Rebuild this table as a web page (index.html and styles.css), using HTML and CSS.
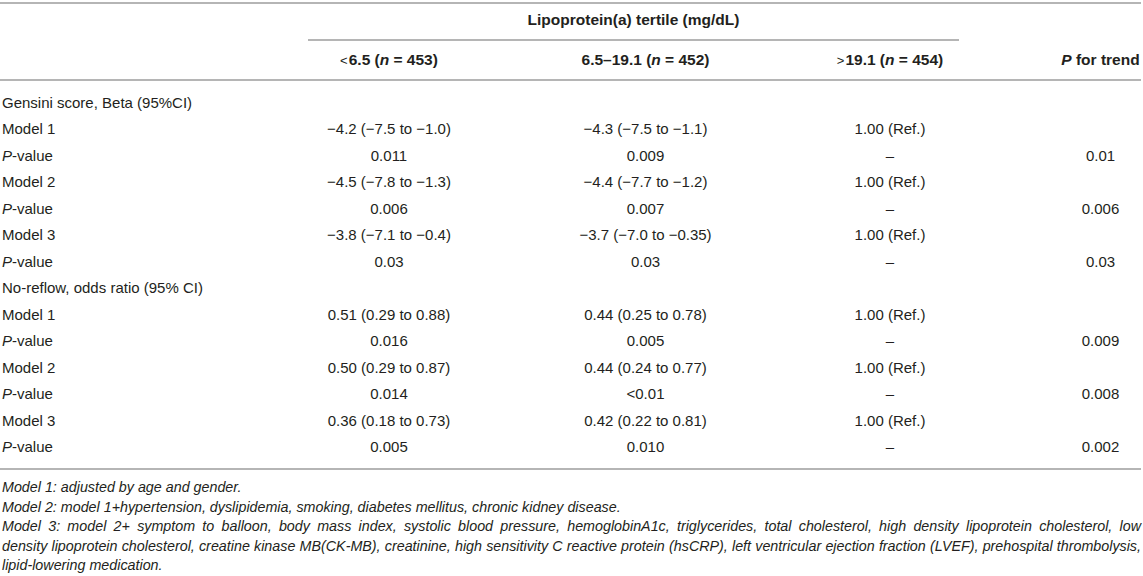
FILE: index.html
```html
<!DOCTYPE html>
<html lang="en">
<head>
<meta charset="utf-8">
<title>Lipoprotein(a) tertile table</title>
<link rel="stylesheet" href="styles.css">
</head>
<body>
<div class="wrap">
<table class="tbl">
  <colgroup>
    <col class="c1"><col class="c2"><col class="c3"><col class="c4"><col class="c5">
  </colgroup>
  <thead>
    <tr class="hr1">
      <th></th>
      <th colspan="3" class="span">Lipoprotein(a) tertile (mg/dL)</th>
      <th></th>
    </tr>
    <tr class="hr2">
      <th></th>
      <th><span class="lt">&lt;</span>6.5 (<i>n</i> = 453)</th>
      <th>6.5–19.1 (<i>n</i> = 452)</th>
      <th><span class="lt">&gt;</span>19.1 (<i>n</i> = 454)</th>
      <th class="trend"><i>P</i> for trend</th>
    </tr>
  </thead>
  <tbody>
    <tr class="first"><td>Gensini score, Beta (95%CI)</td><td></td><td></td><td></td><td class="trend"></td></tr>
    <tr><td>Model 1</td><td>−4.2 (−7.5 to −1.0)</td><td>−4.3 (−7.5 to −1.1)</td><td>1.00 (Ref.)</td><td class="trend"></td></tr>
    <tr><td><i>P</i>-value</td><td>0.011</td><td>0.009</td><td>–</td><td class="trend">0.01</td></tr>
    <tr><td>Model 2</td><td>−4.5 (−7.8 to −1.3)</td><td>−4.4 (−7.7 to −1.2)</td><td>1.00 (Ref.)</td><td class="trend"></td></tr>
    <tr><td><i>P</i>-value</td><td>0.006</td><td>0.007</td><td>–</td><td class="trend">0.006</td></tr>
    <tr><td>Model 3</td><td>−3.8 (−7.1 to −0.4)</td><td>−3.7 (−7.0 to −0.35)</td><td>1.00 (Ref.)</td><td class="trend"></td></tr>
    <tr><td><i>P</i>-value</td><td>0.03</td><td>0.03</td><td>–</td><td class="trend">0.03</td></tr>
    <tr><td>No-reflow, odds ratio (95% CI)</td><td></td><td></td><td></td><td class="trend"></td></tr>
    <tr><td>Model 1</td><td>0.51 (0.29 to 0.88)</td><td>0.44 (0.25 to 0.78)</td><td>1.00 (Ref.)</td><td class="trend"></td></tr>
    <tr><td><i>P</i>-value</td><td>0.016</td><td>0.005</td><td>–</td><td class="trend">0.009</td></tr>
    <tr><td>Model 2</td><td>0.50 (0.29 to 0.87)</td><td>0.44 (0.24 to 0.77)</td><td>1.00 (Ref.)</td><td class="trend"></td></tr>
    <tr><td><i>P</i>-value</td><td>0.014</td><td>&lt;0.01</td><td>–</td><td class="trend">0.008</td></tr>
    <tr><td>Model 3</td><td>0.36 (0.18 to 0.73)</td><td>0.42 (0.22 to 0.81)</td><td>1.00 (Ref.)</td><td class="trend"></td></tr>
    <tr class="last"><td><i>P</i>-value</td><td>0.005</td><td>0.010</td><td>–</td><td class="trend">0.002</td></tr>
  </tbody>
</table>
<div class="notes">
  <p>Model 1: adjusted by age and gender.</p>
  <p>Model 2: model 1+hypertension, dyslipidemia, smoking, diabetes mellitus, chronic kidney disease.</p>
  <p><span class="jl">Model 3: model 2+ symptom to balloon, body mass index, systolic blood pressure, hemoglobinA1c, triglycerides, total cholesterol, high density lipoprotein cholesterol, low</span><span class="jl">density lipoprotein cholesterol, creatine kinase MB(CK-MB), creatinine, high sensitivity C reactive protein (hsCRP), left ventricular ejection fraction (LVEF), prehospital thrombolysis,</span><span class="ll">lipid-lowering medication.</span></p>
</div>
</div>
</body>
</html>
```

FILE: styles.css
```css
html, body {
  margin: 0;
  padding: 0;
  background: #ffffff;
}
body {
  font-family: "Liberation Sans", Arial, sans-serif;
  color: #231f20;
}
.wrap {
  width: 1141px;
  padding-top: 2px;
}
.tbl {
  width: 1141px;
  table-layout: fixed;
  border-collapse: separate;
  border-spacing: 0;
  border-top: 2px solid #b5b5b5;
  font-size: 15px;
}
.c1 { width: 308px; }
.c2 { width: 162px; }
.c3 { width: 351px; }
.c4 { width: 138px; }
.c5 { width: 182px; }
.tbl th {
  font-weight: bold;
  font-size: 15.5px;
  text-align: center;
  padding: 0;
  white-space: nowrap;
}
.hr1 th {
  height: 32px;
  padding-bottom: 3px;
  vertical-align: middle;
}
.hr1 th.span {
  border-bottom: 2px solid #b5b5b5;
}
.hr2 th {
  height: 38px;
  vertical-align: middle;
  border-bottom: 2px solid #b5b5b5;
}
.lt {
  font-weight: normal;
  font-size: 13px;
  margin-right: 1px;
}
.tbl td {
  height: 26.5px;
  padding: 0;
  text-align: center;
  vertical-align: middle;
  white-space: nowrap;
}
.tbl td:first-child {
  text-align: left;
  padding-left: 2px;
}
.tbl th.trend,
.tbl td.trend {
  text-align: center;
  padding-left: 101px;
}
.tbl tr.first td {
  padding-top: 8px;
}
.tbl tr.last td {
  padding-bottom: 8px;
  border-bottom: 2px solid #b5b5b5;
}
.notes {
  margin-top: 8px;
  padding-left: 2px;
  font-size: 14.3px;
  font-style: italic;
  line-height: 19.5px;
}
.notes p {
  margin: 0;
}
.notes .jl {
  display: block;
  text-align: justify;
  text-align-last: justify;
}
.notes .ll {
  display: block;
}
```
